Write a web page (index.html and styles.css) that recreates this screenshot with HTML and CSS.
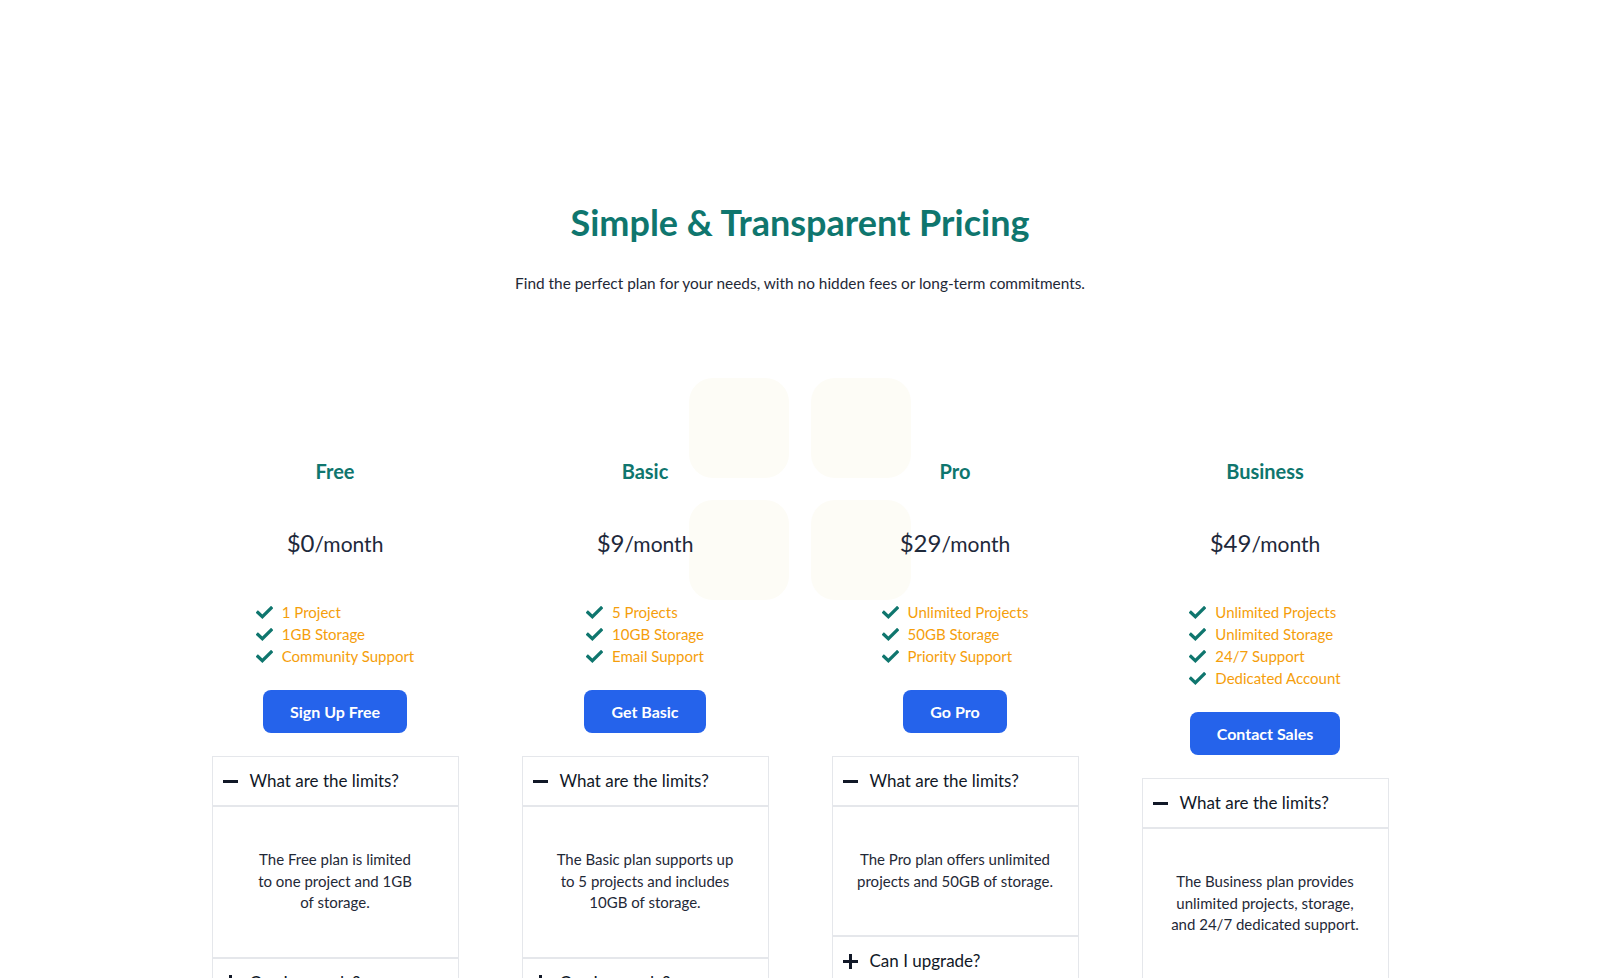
FILE: index.html
```html
<!DOCTYPE html>
<html lang="en">
<head>
<meta charset="utf-8">
<title>Pricing</title>
<link rel="stylesheet" href="styles.css">
</head>
<body>
<section class="pricing">
  <div class="backdrop" aria-hidden="true">
    <span></span><span></span><span></span><span></span>
  </div>
  <h1 class="title">Simple &amp; Transparent Pricing</h1>
  <p class="subtitle">Find the perfect plan for your needs, with no hidden fees or long-term commitments.</p>

  <div class="plans">
    <div class="plan">
      <h3 class="plan-name">Free</h3>
      <p class="price"><span class="amount">$0</span>/month</p>
      <ul class="features">
        <li><svg class="check" viewBox="0 0 16 12"><polyline points="1.8,6 6,10 14.2,1.8"/></svg>1 Project</li>
        <li><svg class="check" viewBox="0 0 16 12"><polyline points="1.8,6 6,10 14.2,1.8"/></svg>1GB Storage</li>
        <li><svg class="check" viewBox="0 0 16 12"><polyline points="1.8,6 6,10 14.2,1.8"/></svg>Community Support</li>
      </ul>
      <a class="btn" href="#">Sign Up Free</a>
      <div class="faq">
        <div class="faq-q"><span class="icon minus"></span>What are the limits?</div>
        <div class="faq-a">The Free plan is limited<br>to one project and 1GB<br>of storage.</div>
        <div class="faq-q"><span class="icon plus"></span>Can I upgrade?</div>
      </div>
    </div>

    <div class="plan">
      <h3 class="plan-name">Basic</h3>
      <p class="price"><span class="amount">$9</span>/month</p>
      <ul class="features">
        <li><svg class="check" viewBox="0 0 16 12"><polyline points="1.8,6 6,10 14.2,1.8"/></svg>5 Projects</li>
        <li><svg class="check" viewBox="0 0 16 12"><polyline points="1.8,6 6,10 14.2,1.8"/></svg>10GB Storage</li>
        <li><svg class="check" viewBox="0 0 16 12"><polyline points="1.8,6 6,10 14.2,1.8"/></svg>Email Support</li>
      </ul>
      <a class="btn" href="#">Get Basic</a>
      <div class="faq">
        <div class="faq-q"><span class="icon minus"></span>What are the limits?</div>
        <div class="faq-a">The Basic plan supports up<br>to 5 projects and includes<br>10GB of storage.</div>
        <div class="faq-q"><span class="icon plus"></span>Can I upgrade?</div>
      </div>
    </div>

    <div class="plan">
      <h3 class="plan-name">Pro</h3>
      <p class="price"><span class="amount">$29</span>/month</p>
      <ul class="features">
        <li><svg class="check" viewBox="0 0 16 12"><polyline points="1.8,6 6,10 14.2,1.8"/></svg>Unlimited Projects</li>
        <li><svg class="check" viewBox="0 0 16 12"><polyline points="1.8,6 6,10 14.2,1.8"/></svg>50GB Storage</li>
        <li><svg class="check" viewBox="0 0 16 12"><polyline points="1.8,6 6,10 14.2,1.8"/></svg>Priority Support</li>
      </ul>
      <a class="btn" href="#">Go Pro</a>
      <div class="faq">
        <div class="faq-q"><span class="icon minus"></span>What are the limits?</div>
        <div class="faq-a">The Pro plan offers unlimited<br>projects and 50GB of storage.</div>
        <div class="faq-q"><span class="icon plus"></span>Can I upgrade?</div>
      </div>
    </div>

    <div class="plan">
      <h3 class="plan-name">Business</h3>
      <p class="price"><span class="amount">$49</span>/month</p>
      <ul class="features">
        <li><svg class="check" viewBox="0 0 16 12"><polyline points="1.8,6 6,10 14.2,1.8"/></svg>Unlimited Projects</li>
        <li><svg class="check" viewBox="0 0 16 12"><polyline points="1.8,6 6,10 14.2,1.8"/></svg>Unlimited Storage</li>
        <li><svg class="check" viewBox="0 0 16 12"><polyline points="1.8,6 6,10 14.2,1.8"/></svg>24/7 Support</li>
        <li><svg class="check" viewBox="0 0 16 12"><polyline points="1.8,6 6,10 14.2,1.8"/></svg>Dedicated Account</li>
      </ul>
      <a class="btn" href="#">Contact Sales</a>
      <div class="faq">
        <div class="faq-q"><span class="icon minus"></span>What are the limits?</div>
        <div class="faq-a">The Business plan provides<br>unlimited projects, storage,<br>and 24/7 dedicated support.</div>
        <div class="faq-q"><span class="icon plus"></span>Can I upgrade?</div>
      </div>
    </div>
  </div>
</section>
</body>
</html>
```

FILE: styles.css
```css
html, body {
  margin: 0;
  padding: 0;
  background: #ffffff;
}
html {
  overflow: hidden;
}
body {
  font-family: "Lato", "Noto Sans", sans-serif;
  color: #1f2937;
}
.pricing {
  position: relative;
  padding-top: 198px;
  text-align: center;
}
.backdrop {
  position: absolute;
  top: 378px;
  left: 50%;
  margin-left: -111px;
  display: grid;
  grid-template-columns: 100px 100px;
  grid-auto-rows: 100px;
  gap: 22px;
  z-index: 0;
}
.backdrop span {
  background: #fdfcf6;
  border-radius: 24px;
}
.title {
  position: relative;
  margin: 0;
  font-size: 36px;
  line-height: 48px;
  font-weight: 700;
  color: #0f766e;
}
.subtitle {
  position: relative;
  margin: 25px 0 0;
  font-size: 15.4px;
  line-height: 24px;
  color: #1f2937;
}
.plans {
  position: relative;
  z-index: 1;
  margin-top: 162px;
  display: grid;
  grid-template-columns: repeat(4, 247px);
  column-gap: 63px;
  justify-content: center;
  align-items: start;
}
.plan {
  display: flex;
  flex-direction: column;
  align-items: center;
}
.plan-name {
  margin: 0;
  font-size: 20px;
  line-height: 28px;
  font-weight: 700;
  color: #0f766e;
}
.price {
  margin: 42px 0 0;
  font-size: 21px;
  line-height: 32px;
  color: #1e293b;
}
.amount {
  font-size: 24px;
}
.features {
  list-style: none;
  margin: 41px 0 0;
  padding: 0;
  text-align: left;
}
.features li {
  display: flex;
  align-items: center;
  font-size: 15px;
  line-height: 22px;
  color: #f59e0b;
}
.check {
  width: 17px;
  height: 13px;
  margin-right: 9px;
  fill: none;
  stroke: #0f766e;
  stroke-width: 3;
  stroke-linecap: square;
  stroke-linejoin: miter;
}
.btn {
  margin-top: 23px;
  display: inline-block;
  padding: 12px 27px;
  font-size: 16px;
  line-height: 19px;
  font-weight: 700;
  color: #ffffff;
  background: #2563eb;
  border-radius: 8px;
  text-decoration: none;
}
.faq {
  margin-top: 23px;
  width: 247px;
  box-sizing: border-box;
  border: 1px solid #e5e7eb;
  text-align: left;
}
.faq-q {
  display: flex;
  align-items: center;
  padding: 12px 12px 12px 10px;
  font-size: 17px;
  line-height: 24px;
  color: #111827;
  border-bottom: 2px solid #e5e7eb;
}
.icon {
  position: relative;
  width: 15px;
  height: 15px;
  margin-right: 12px;
  flex: none;
}
.icon::before,
.icon::after {
  content: "";
  position: absolute;
  background: #111827;
}
.icon::before {
  left: 0;
  right: 0;
  top: 6px;
  height: 3px;
}
.plus::after {
  top: 0;
  bottom: 0;
  left: 6px;
  width: 3px;
}
.faq-a {
  padding: 42px 16px 43px;
  font-size: 15px;
  line-height: 21.5px;
  text-align: center;
  color: #1f2937;
  border-bottom: 2px solid #e5e7eb;
}
```
